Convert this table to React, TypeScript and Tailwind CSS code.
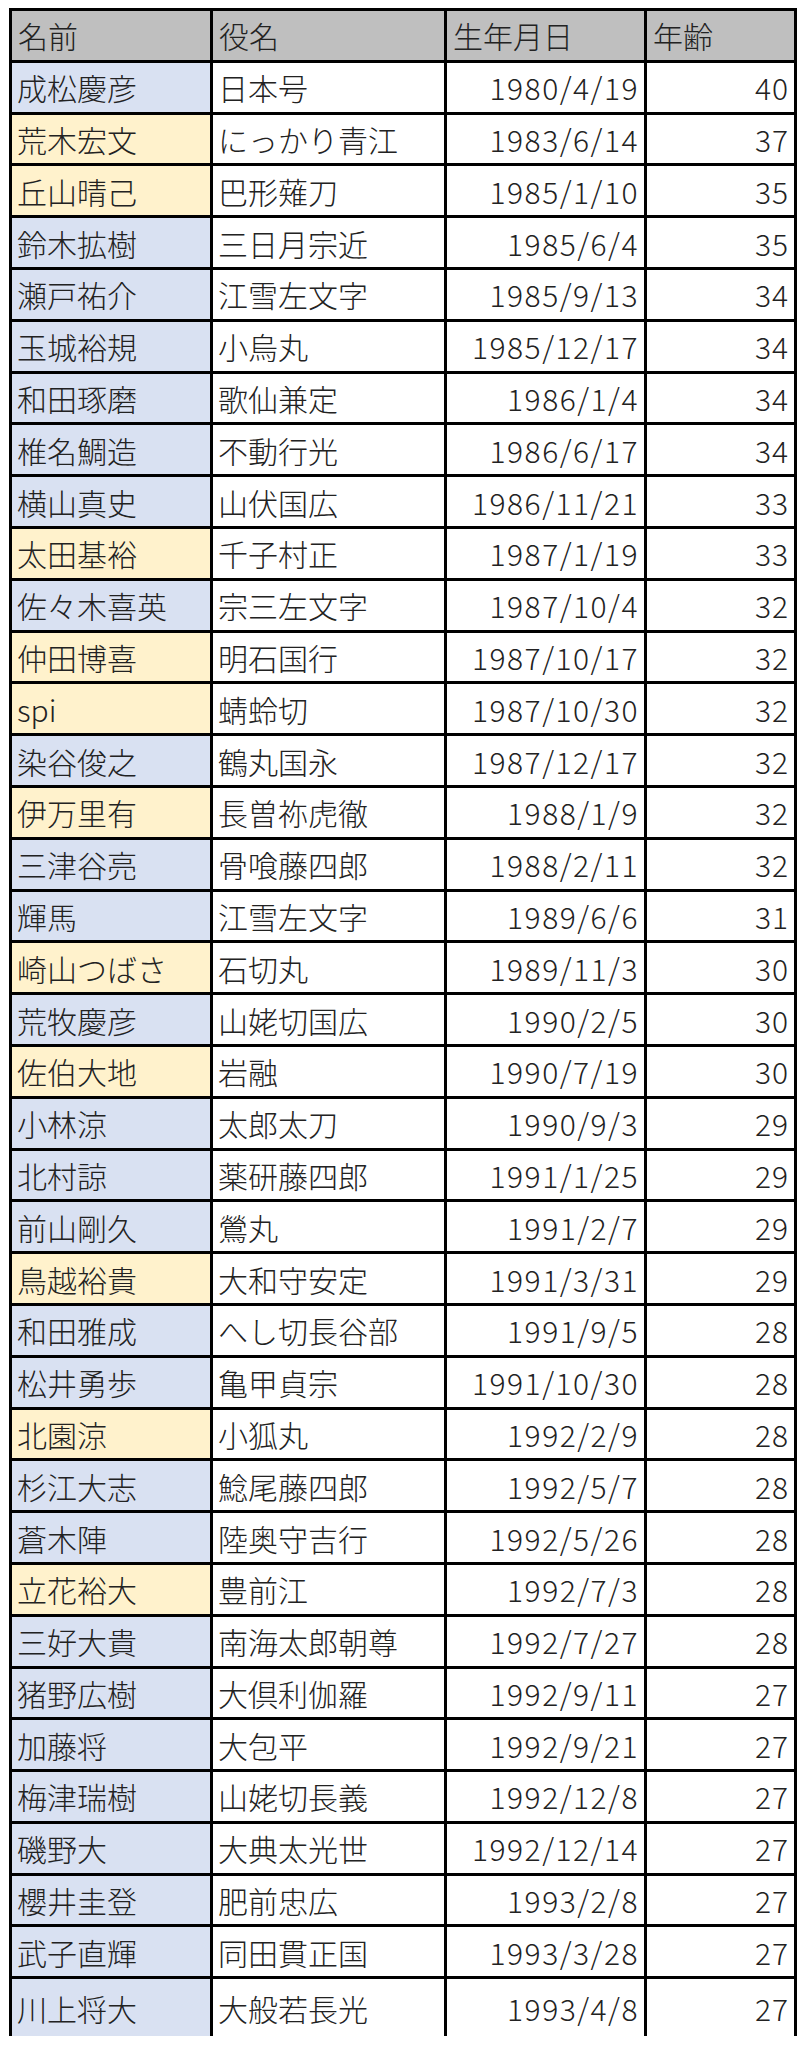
import React from 'react';

// 表の行データ（名前・役名・生年月日・年齢・色）
type Row = {
  name: string;
  role: string;
  birth: string;
  age: number;
  tone: 'blue' | 'yellow';
};

const rows: Row[] = [
  { name: '成松慶彦', role: '日本号', birth: '1980/4/19', age: 40, tone: 'blue' },
  { name: '荒木宏文', role: 'にっかり青江', birth: '1983/6/14', age: 37, tone: 'yellow' },
  { name: '丘山晴己', role: '巴形薙刀', birth: '1985/1/10', age: 35, tone: 'yellow' },
  { name: '鈴木拡樹', role: '三日月宗近', birth: '1985/6/4', age: 35, tone: 'blue' },
  { name: '瀬戸祐介', role: '江雪左文字', birth: '1985/9/13', age: 34, tone: 'blue' },
  { name: '玉城裕規', role: '小烏丸', birth: '1985/12/17', age: 34, tone: 'blue' },
  { name: '和田琢磨', role: '歌仙兼定', birth: '1986/1/4', age: 34, tone: 'blue' },
  { name: '椎名鯛造', role: '不動行光', birth: '1986/6/17', age: 34, tone: 'blue' },
  { name: '横山真史', role: '山伏国広', birth: '1986/11/21', age: 33, tone: 'blue' },
  { name: '太田基裕', role: '千子村正', birth: '1987/1/19', age: 33, tone: 'yellow' },
  { name: '佐々木喜英', role: '宗三左文字', birth: '1987/10/4', age: 32, tone: 'blue' },
  { name: '仲田博喜', role: '明石国行', birth: '1987/10/17', age: 32, tone: 'yellow' },
  { name: 'spi', role: '蜻蛉切', birth: '1987/10/30', age: 32, tone: 'yellow' },
  { name: '染谷俊之', role: '鶴丸国永', birth: '1987/12/17', age: 32, tone: 'blue' },
  { name: '伊万里有', role: '長曽祢虎徹', birth: '1988/1/9', age: 32, tone: 'yellow' },
  { name: '三津谷亮', role: '骨喰藤四郎', birth: '1988/2/11', age: 32, tone: 'blue' },
  { name: '輝馬', role: '江雪左文字', birth: '1989/6/6', age: 31, tone: 'blue' },
  { name: '崎山つばさ', role: '石切丸', birth: '1989/11/3', age: 30, tone: 'yellow' },
  { name: '荒牧慶彦', role: '山姥切国広', birth: '1990/2/5', age: 30, tone: 'blue' },
  { name: '佐伯大地', role: '岩融', birth: '1990/7/19', age: 30, tone: 'yellow' },
  { name: '小林涼', role: '太郎太刀', birth: '1990/9/3', age: 29, tone: 'blue' },
  { name: '北村諒', role: '薬研藤四郎', birth: '1991/1/25', age: 29, tone: 'blue' },
  { name: '前山剛久', role: '鶯丸', birth: '1991/2/7', age: 29, tone: 'blue' },
  { name: '鳥越裕貴', role: '大和守安定', birth: '1991/3/31', age: 29, tone: 'yellow' },
  { name: '和田雅成', role: 'へし切長谷部', birth: '1991/9/5', age: 28, tone: 'blue' },
  { name: '松井勇歩', role: '亀甲貞宗', birth: '1991/10/30', age: 28, tone: 'blue' },
  { name: '北園涼', role: '小狐丸', birth: '1992/2/9', age: 28, tone: 'yellow' },
  { name: '杉江大志', role: '鯰尾藤四郎', birth: '1992/5/7', age: 28, tone: 'blue' },
  { name: '蒼木陣', role: '陸奥守吉行', birth: '1992/5/26', age: 28, tone: 'blue' },
  { name: '立花裕大', role: '豊前江', birth: '1992/7/3', age: 28, tone: 'yellow' },
  { name: '三好大貴', role: '南海太郎朝尊', birth: '1992/7/27', age: 28, tone: 'blue' },
  { name: '猪野広樹', role: '大倶利伽羅', birth: '1992/9/11', age: 27, tone: 'blue' },
  { name: '加藤将', role: '大包平', birth: '1992/9/21', age: 27, tone: 'blue' },
  { name: '梅津瑞樹', role: '山姥切長義', birth: '1992/12/8', age: 27, tone: 'blue' },
  { name: '磯野大', role: '大典太光世', birth: '1992/12/14', age: 27, tone: 'blue' },
  { name: '櫻井圭登', role: '肥前忠広', birth: '1993/2/8', age: 27, tone: 'blue' },
  { name: '武子直輝', role: '同田貫正国', birth: '1993/3/28', age: 27, tone: 'blue' },
  { name: '川上将大', role: '大般若長光', birth: '1993/4/8', age: 27, tone: 'blue' },
];

const cell = 'flex items-center leading-none';

export default function App() {
  return (
    <div
      className="min-h-[2048px] bg-white text-[30px] font-light text-[#222222]"
      style={{ fontFamily: '"Noto Sans CJK JP", "Noto Sans", sans-serif' }}
    >
      <div className="ml-[9px] mt-[8px] w-[788px] bg-black px-[3px] pt-[3px]">
        <div className="grid grid-cols-[198px_231px_197px_147px] gap-x-[3px] gap-y-[3px]">
          {/* ヘッダー */}
          {['名前', '役名', '生年月日', '年齢'].map((h) => (
            <div key={h} className={`${cell} h-[48.8px] bg-[#bfbfbf] pl-[6px]`}>
              {h}
            </div>
          ))}

          {/* データ行 */}
          {rows.map((r, i) => {
            const last = i === rows.length - 1;
            const h = last ? 'h-[57px]' : 'h-[48.8px]';
            const tone = r.tone === 'yellow' ? 'bg-[#fff2cc]' : 'bg-[#d9e1f2]';
            return (
              <React.Fragment key={r.name + i}>
                <div className={`${cell} ${h} ${tone} pl-[5px]`}>{r.name}</div>
                <div className={`${cell} ${h} bg-white pl-[5px]`}>{r.role}</div>
                <div className={`${cell} ${h} justify-end bg-white pr-[5px] tracking-[1.5px]`}>
                  {r.birth}
                </div>
                <div className={`${cell} ${h} justify-end bg-white pr-[5px] tracking-[1px]`}>
                  {r.age}
                </div>
              </React.Fragment>
            );
          })}
        </div>
      </div>
    </div>
  );
}
